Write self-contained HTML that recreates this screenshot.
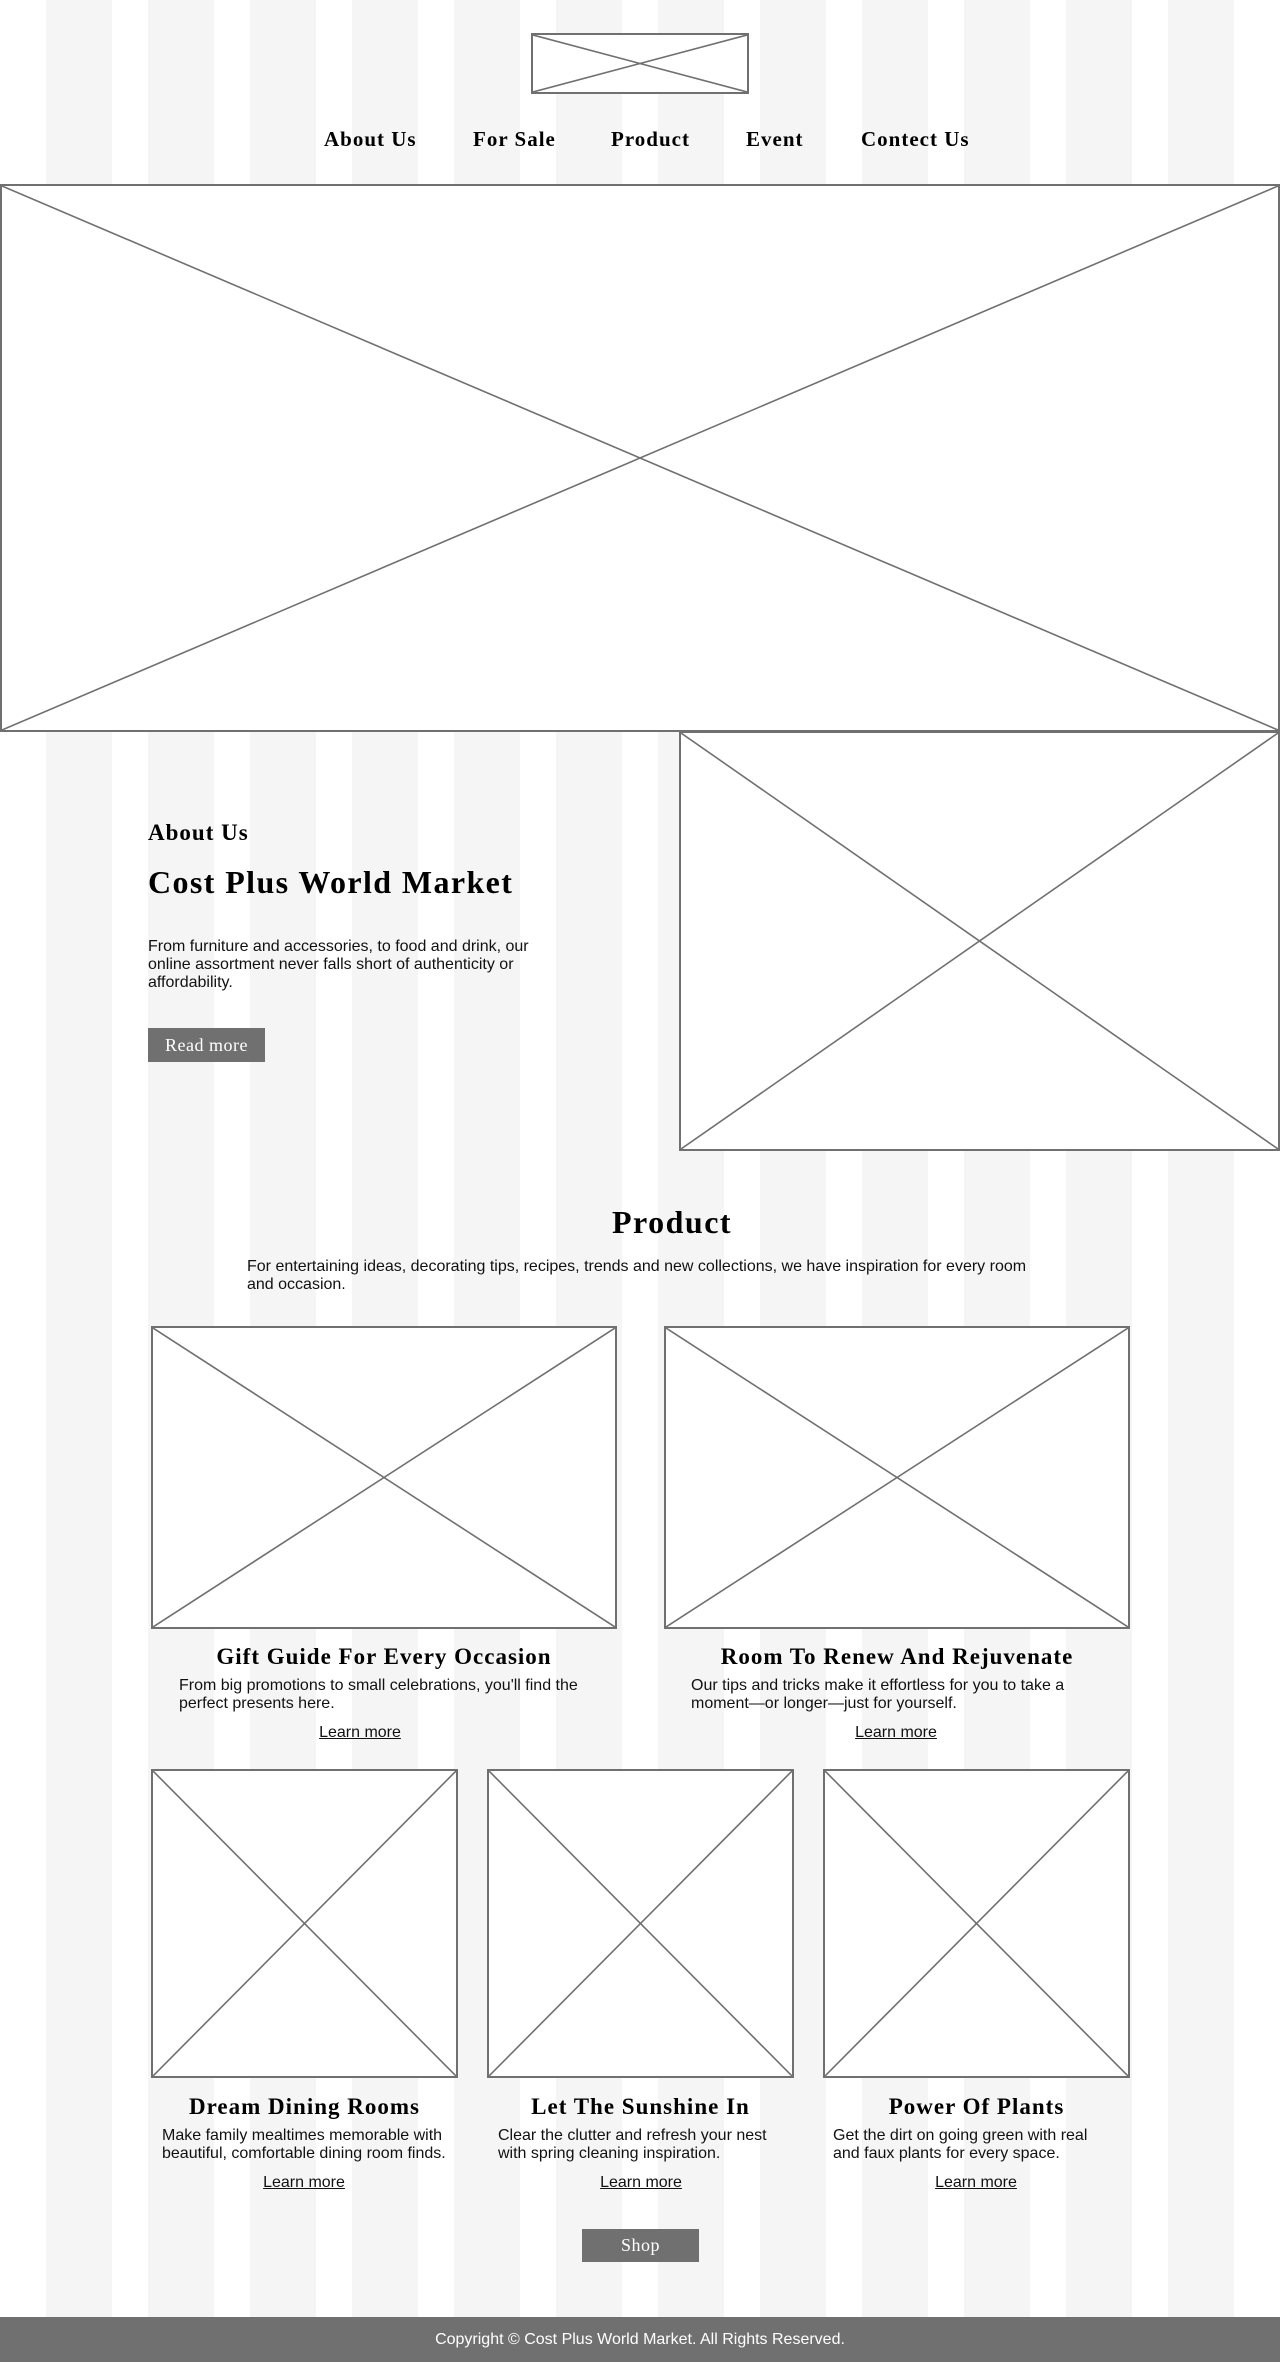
<!DOCTYPE html>
<html><head><meta charset="utf-8"><style>
*{margin:0;padding:0;box-sizing:border-box}
html,body{width:1280px;height:2362px;overflow:hidden}
body{position:relative;background:#fff;font-family:"Liberation Sans",Arial,sans-serif;color:#111}
.stripes{position:absolute;left:46px;top:0;width:1188px;height:2362px;background:repeating-linear-gradient(to right,#f5f5f5 0,#f5f5f5 66px,#fff 66px,#fff 102px)}
.ph{position:absolute;border:2px solid #707070;background:#fff}
.ph svg{position:absolute;left:0;top:0;width:100%;height:100%}
.ph line{stroke:#707070;stroke-width:1.6;vector-effect:non-scaling-stroke}
.a{position:absolute;white-space:nowrap}
.serif{font-family:"Liberation Serif",Georgia,serif;font-weight:bold;color:#000;letter-spacing:1px}
.nav{font-size:21px;line-height:24px;top:127px}
.p{font-size:16px;line-height:18px;white-space:normal;color:#111}
.t{font-size:23px;line-height:28px;text-align:center}
.lm{font-size:16px;line-height:18px;text-decoration:underline;color:#111;transform:translateX(-50%)}
.btn{position:absolute;background:#707070;color:#fff;font-family:"Liberation Serif",Georgia,serif;font-size:18px;display:flex;align-items:center;justify-content:center;letter-spacing:.5px}
</style></head><body>
<div class="stripes"></div>

<div class="ph" style="left:531px;top:33px;width:218px;height:61px"><svg viewBox="0 0 100 100" preserveAspectRatio="none"><line x1="0" y1="0" x2="100" y2="100"/><line x1="100" y1="0" x2="0" y2="100"/></svg></div>

<div class="a serif nav" style="left:324px">About Us</div>
<div class="a serif nav" style="left:473px">For Sale</div>
<div class="a serif nav" style="left:611px">Product</div>
<div class="a serif nav" style="left:746px">Event</div>
<div class="a serif nav" style="left:861px">Contect Us</div>

<div class="ph" style="left:0;top:184px;width:1280px;height:548px"><svg viewBox="0 0 100 100" preserveAspectRatio="none"><line x1="0" y1="0" x2="100" y2="100"/><line x1="100" y1="0" x2="0" y2="100"/></svg></div>

<div class="ph" style="left:679px;top:731px;width:601px;height:420px"><svg viewBox="0 0 100 100" preserveAspectRatio="none"><line x1="0" y1="0" x2="100" y2="100"/><line x1="100" y1="0" x2="0" y2="100"/></svg></div>

<div class="a serif" style="left:148px;top:818px;font-size:23px;line-height:30px">About Us</div>
<div class="a serif" style="left:148px;top:862px;font-size:32px;line-height:40px;letter-spacing:1.4px">Cost Plus World Market</div>
<div class="a p" style="left:148px;top:938px;width:395px">From furniture and accessories, to food and drink, our online assortment never falls short of authenticity or affordability.</div>
<div class="btn" style="left:148px;top:1028px;width:117px;height:34px">Read more</div>

<div class="a serif" style="left:32px;width:1280px;text-align:center;top:1202px;font-size:32px;line-height:40px;letter-spacing:1.5px">Product</div>
<div class="a p" style="left:247px;top:1258px;width:795px">For entertaining ideas, decorating tips, recipes, trends and new collections, we have inspiration for every room and occasion.</div>

<div class="ph" style="left:151px;top:1326px;width:466px;height:303px"><svg viewBox="0 0 100 100" preserveAspectRatio="none"><line x1="0" y1="0" x2="100" y2="100"/><line x1="100" y1="0" x2="0" y2="100"/></svg></div>
<div class="ph" style="left:664px;top:1326px;width:466px;height:303px"><svg viewBox="0 0 100 100" preserveAspectRatio="none"><line x1="0" y1="0" x2="100" y2="100"/><line x1="100" y1="0" x2="0" y2="100"/></svg></div>

<div class="a serif t" style="left:151px;width:466px;top:1643px">Gift Guide For Every Occasion</div>
<div class="a p" style="left:179px;top:1677px;width:420px">From big promotions to small celebrations, you'll find the perfect presents here.</div>
<div class="a lm" style="left:360px;top:1724px">Learn more</div>

<div class="a serif t" style="left:664px;width:466px;top:1643px">Room To Renew And Rejuvenate</div>
<div class="a p" style="left:691px;top:1677px;width:420px">Our tips and tricks make it effortless for you to take a moment—or longer—just for yourself.</div>
<div class="a lm" style="left:896px;top:1724px">Learn more</div>

<div class="ph" style="left:151px;top:1769px;width:307px;height:309px"><svg viewBox="0 0 100 100" preserveAspectRatio="none"><line x1="0" y1="0" x2="100" y2="100"/><line x1="100" y1="0" x2="0" y2="100"/></svg></div>
<div class="ph" style="left:487px;top:1769px;width:307px;height:309px"><svg viewBox="0 0 100 100" preserveAspectRatio="none"><line x1="0" y1="0" x2="100" y2="100"/><line x1="100" y1="0" x2="0" y2="100"/></svg></div>
<div class="ph" style="left:823px;top:1769px;width:307px;height:309px"><svg viewBox="0 0 100 100" preserveAspectRatio="none"><line x1="0" y1="0" x2="100" y2="100"/><line x1="100" y1="0" x2="0" y2="100"/></svg></div>

<div class="a serif t" style="left:151px;width:307px;top:2093px">Dream Dining Rooms</div>
<div class="a p" style="left:162px;top:2127px;width:295px">Make family mealtimes memorable with beautiful, comfortable dining room finds.</div>
<div class="a lm" style="left:304px;top:2174px">Learn more</div>

<div class="a serif t" style="left:487px;width:307px;top:2093px">Let The Sunshine In</div>
<div class="a p" style="left:498px;top:2127px;width:290px">Clear the clutter and refresh your nest with spring cleaning inspiration.</div>
<div class="a lm" style="left:641px;top:2174px">Learn more</div>

<div class="a serif t" style="left:823px;width:307px;top:2093px">Power Of Plants</div>
<div class="a p" style="left:833px;top:2127px;width:275px">Get the dirt on going green with real and faux plants for every space.</div>
<div class="a lm" style="left:976px;top:2174px">Learn more</div>

<div class="btn" style="left:582px;top:2229px;width:117px;height:33px">Shop</div>

<div style="position:absolute;left:0;top:2317px;width:1280px;height:45px;background:#707070;color:#fff;font-size:16px;display:flex;align-items:center;justify-content:center">Copyright © Cost Plus World Market. All Rights Reserved.</div>
</body></html>
